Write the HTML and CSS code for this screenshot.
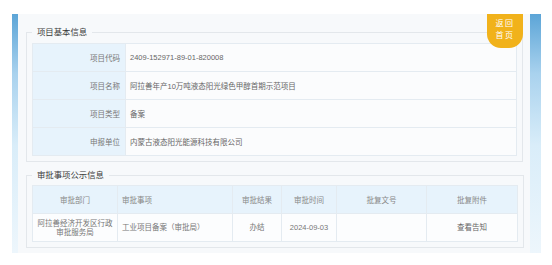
FILE: index.html
```html
<!DOCTYPE html>
<html lang="zh-CN">
<head>
    <meta charset="UTF-8">
    <meta name="viewport" content="width=device-width, initial-scale=1.0">
    <title>项目基本信息</title>
    <link rel="stylesheet" href="styles.css">
</head>
<body>

<div class="page">
    <div class="strip strip-left"></div>

    <div class="main">
        <a class="back-home">返回<br>首页</a>

        <fieldset class="box">
            <legend>项目基本信息</legend>
            <table class="info-table">
                <tr>
                    <td class="label">项目代码</td>
                    <td>2409-152971-89-01-820008</td>
                </tr>
                <tr>
                    <td class="label">项目名称</td>
                    <td>阿拉善年产10万吨液态阳光绿色甲醇首期示范项目</td>
                </tr>
                <tr>
                    <td class="label">项目类型</td>
                    <td>备案</td>
                </tr>
                <tr>
                    <td class="label">申报单位</td>
                    <td>内蒙古液态阳光能源科技有限公司</td>
                </tr>
            </table>
        </fieldset>

        <fieldset class="box box-approval">
            <legend>审批事项公示信息</legend>
            <table class="approval-table">
                <colgroup>
                    <col class="c-dept">
                    <col class="c-item">
                    <col class="c-result">
                    <col class="c-date">
                    <col class="c-doc">
                    <col class="c-file">
                </colgroup>
                <tr>
                    <th>审批部门</th>
                    <th class="left">审批事项</th>
                    <th>审批结果</th>
                    <th>审批时间</th>
                    <th>批复文号</th>
                    <th>批复附件</th>
                </tr>
                <tr>
                    <td>阿拉善经济开发区行政<br>审批服务局</td>
                    <td class="left">工业项目备案（审批局）</td>
                    <td>办结</td>
                    <td>2024-09-03</td>
                    <td></td>
                    <td><a class="view-link">查看告知</a></td>
                </tr>
            </table>
        </fieldset>
    </div>

    <div class="strip strip-right"></div>
</div>

</body>
</html>
```

FILE: styles.css
```css
body {
    margin: 0;
    background-color: #ffffff;
    font-family: "Liberation Sans", "Noto Sans CJK SC", sans-serif;
    color: #777;
}
.page {
    display: flex;
    margin: 14px 0 0 12px;
    width: 529px;
    height: 239px;
}
.strip {
    background: linear-gradient(#5ca5d7, #a9d2ee 25%, #d9edf9 55%, #edf6fc);
}
.strip-left {
    width: 6px;
}
.strip-right {
    width: 11px;
}
.main {
    position: relative;
    width: 512px;
    padding: 11px 7px 0 8px;
    box-sizing: border-box;
    background-color: #f7f9fb;
}
.back-home {
    position: absolute;
    top: 0;
    right: 7px;
    width: 36px;
    height: 34px;
    padding-top: 4px;
    box-sizing: border-box;
    background-color: #f1b21b;
    border-radius: 0 0 14px 14px;
    color: #fff;
    font-size: 8px;
    line-height: 11.5px;
    letter-spacing: 1.5px;
    text-align: center;
    cursor: pointer;
}
.box {
    margin: 0;
    padding: 4px 5px 5px;
    border: 1px solid #e3e7eb;
}
.box legend {
    padding: 0 5px;
    font-size: 8.4px;
    line-height: 14px;
    color: #3a3a3a;
}
.box-approval {
    margin-top: 6px;
    padding-top: 3px;
}
table {
    width: 100%;
    border-collapse: collapse;
    font-size: 7.5px;
}
td, th {
    border: 1px solid #e4ebf1;
    padding: 0;
    font-weight: normal;
}
.info-table td {
    height: 27px;
    padding-left: 4px;
    background-color: #fbfcfd;
    color: #666;
}
.info-table td.label {
    width: 87px;
    padding: 0 5px 0 0;
    text-align: right;
    background-color: #e7f3fc;
    color: #777;
}
.approval-table {
    table-layout: fixed;
}
.approval-table th {
    height: 27px;
    background-color: #e7f3fc;
    color: #888;
    text-align: center;
}
.approval-table td {
    height: 27px;
    line-height: 9px;
    text-align: center;
    background-color: #fcfdfe;
}
.approval-table .left {
    text-align: left;
    padding-left: 4px;
}
.c-dept { width: 85px; }
.c-item { width: 115px; }
.c-result { width: 49px; }
.c-date { width: 55px; }
.c-doc { width: 90px; }
.c-file { width: 91px; }
.view-link {
    color: #666;
    cursor: pointer;
}
```
